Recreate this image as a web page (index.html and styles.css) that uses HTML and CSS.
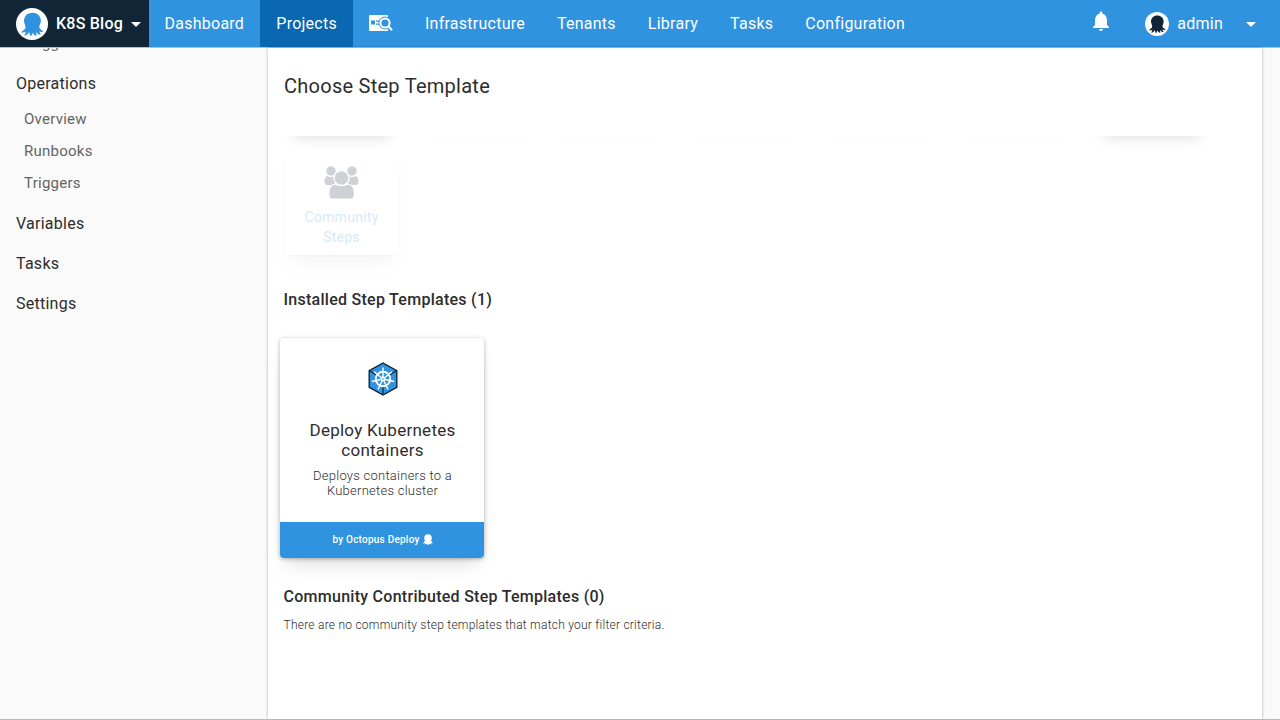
FILE: index.html
```html
<!DOCTYPE html>
<html lang="en">
<head>
<meta charset="utf-8">
<title>Choose Step Template</title>
<link rel="stylesheet" href="styles.css">
</head>
<body>
<svg class="defs" width="0" height="0">
  <symbol id="octopus" viewBox="0 0 32 32">
    <path d="M16.400 4.700C11.300 4.700 8 8.300 8 12.700c0 3 1.800 4.800 1.500 7-.3 2.200-2.400 2.500-4.500 4.500 1.800.6 3.600.2 5-.7l-1.700 4.200c2.200-.2 3.600-1.600 4.800-3.400l1.500 3.900c1.200-.6 1.700-2.200 2.200-3.800.7 1.700 1.700 3.100 3.400 3.500.4-1.300.1-2.700-.2-4 1.300 1.500 2.700 2.900 4.600 2.800-.1-1.300-.8-2.300-1.600-3.400 1.400.7 2.800 1 4.400.2-1.600-2-3.800-2-4.100-4.200-.3-2 1.700-4 1.600-6.600-.2-4.600-3.500-8-8.500-8z"/>
  </symbol>
</svg>
<header class="topbar">
  <div class="space">
    <svg class="space-logo" viewBox="0 0 32 32"><circle cx="16" cy="16" r="16" fill="#fff"/><use href="#octopus" fill="#2f93e0"/></svg>
    <span>K8S Blog</span><i class="caret"></i>
  </div>
  <nav class="nav">
    <a class="dashboard">Dashboard</a>
    <a class="active">Projects</a>
    <a class="nav-search"><svg width="24" height="17" viewBox="0 0 24 17"><path d="M1 0h17a1 1 0 0 1 1 1v15H1a1 1 0 0 1-1-1V1a1 1 0 0 1 1-1z" fill="#fff"/><path d="M2 5.500h4v4H2zM7 5.500h4v1.200H7zM7 8.500h4v1.200H7z" fill="#2f93e0"/><circle cx="16" cy="8" r="6.500" fill="#2f93e0"/><circle cx="16" cy="8" r="4.600" fill="#2f93e0" stroke="#fff" stroke-width="2"/><path d="M19.300 11.300l3.700 4" stroke="#fff" stroke-width="2.200"/></svg></a>
    <a>Infrastructure</a>
    <a>Tenants</a>
    <a>Library</a>
    <a>Tasks</a>
    <a>Configuration</a>
  </nav>
  <div class="account">
    <svg class="bell" width="24" height="24" viewBox="0 0 24 24"><path d="M12 22c1.100 0 2-.9 2-2h-4c0 1.100.9 2 2 2zm6-6v-5c0-3.070-1.640-5.640-4.500-6.320V4c0-.83-.67-1.500-1.500-1.500s-1.500.67-1.500 1.500v.68C7.630 5.360 6 7.920 6 11v5l-2 2v1h16v-1l-2-2z" fill="#fff"/></svg>
    <svg class="avatar" viewBox="0 0 32 32"><circle cx="16" cy="16" r="16" fill="#fff"/><use href="#octopus" fill="#122536"/></svg>
    <span>admin</span><i class="caret"></i>
  </div>
</header>
<div class="page">
  <aside class="sidebar">
    <a class="sub clipped">Triggers</a>
    <a class="group">Operations</a>
    <a class="sub">Overview</a>
    <a class="sub">Runbooks</a>
    <a class="sub">Triggers</a>
    <a class="group">Variables</a>
    <a class="group">Tasks</a>
    <a class="group">Settings</a>
  </aside>
  <main class="paper">
    <h1>Choose Step Template</h1>
    <section class="categories">
      <div class="row-above"><i class="solid"></i><i></i><i></i><i></i><i></i><i></i><i class="solid"></i></div>
      <div class="category">
        <svg width="36" height="34" viewBox="0 0 36 34"><g fill="#122536"><circle cx="7" cy="5" r="4.700"/><circle cx="28" cy="5" r="4.700"/><path d="M3 10q4 2 8 0v9H3q-2.500-.5-2.500-3.500 0-4 2.500-5.500zM32 10q-4 2-8 0v9h8q2.500-.5 2.500-3.500 0-4-2.500-5.500z"/></g><path d="M11 18q6.500 3.500 13 0 6 1 6.500 9 .2 6-3.500 6H8q-3.500 0-3.200-6 .5-8 6.200-9z" fill="#122536" stroke="#fff" stroke-width="1.200"/><circle cx="17.500" cy="12" r="7.500" fill="#122536" stroke="#fff" stroke-width="1.300"/></svg>
        <span>Community<br>Steps</span>
      </div>
    </section>
    <h2>Installed Step Templates (1)</h2>
    <article class="card">
      <div class="card-body">
        <svg class="kube" width="30" height="34" viewBox="0 0 30 34"><path d="M15 1l13.800 7.600v16.800L15 33 1.200 25.400V8.600z" fill="#2f93e0" stroke="#122536" stroke-width="1.400"/><path d="M1.500 8.800L15 17l13.500-8.200M15 17v16" stroke="#122536" stroke-width="1.200" fill="none"/><circle cx="15" cy="17" r="7.200" fill="#2f93e0" stroke="#fff" stroke-width="1.900"/><path d="M15 17V5.500M15 17l8.900-7.200M15 17l11.200 2.500M15 17l5 10.400M15 17l-5 10.400M15 17L3.800 19.500M15 17L6.100 9.800" stroke="#fff" stroke-width="1.400"/><circle cx="15" cy="17" r="2.400" fill="#fff"/><circle cx="15" cy="17" r=".8" fill="#2f93e0"/></svg>
        <h3>Deploy Kubernetes containers</h3>
        <p>Deploys containers to a Kubernetes cluster</p>
      </div>
      <footer>by Octopus Deploy <svg width="10" height="11" viewBox="0 0 10 11"><path d="M5 .3C2.500.3 1.200 2 1.200 4c.1 1.200.7 1.700.5 2.800C1.500 8 .7 8.500.1 9.200c.8.400 1.500.1 2-.2l-.3 1.700 1.700-1.200.8 1.200h1.400l.8-1.200 1.700 1.200L8 9c.6.500 1.300.6 2 .1C9.200 8.600 8.400 8 8.300 6.800 8.200 5.700 8.800 5.200 8.800 4 8.900 1.800 7.500.3 5 .3z" fill="#fff"/></svg></footer>
    </article>
    <h2 class="community-title">Community Contributed Step Templates (0)</h2>
    <p class="empty">There are no community step templates that match your filter criteria.</p>
  </main>
</div>
</body>
</html>
```
FILE: styles.css
```css
* { box-sizing: border-box; }
body {
  margin: 0;
  height: 720px;
  overflow: hidden;
  display: flex;
  flex-direction: column;
  background: #fafafa;
  border-bottom: 1px solid #b8b8b8;
  font-family: Roboto, "Liberation Sans", sans-serif;
  color: #2d2d2d;
}
.defs { display: none; }
h1, h2, h3, p { margin: 0; }
.topbar {
  flex: none;
  display: flex;
  height: 48px;
  background: #2f93e0;
  border-bottom: 1px solid #b9bec3;
  color: #fff;
  font-size: 16px;
  letter-spacing: 0.25px;
}
.space {
  display: flex;
  align-items: center;
  width: 149px;
  padding-left: 16px;
  background: #122536;
  font-weight: 500;
  letter-spacing: 0.23px;
}
.space-logo { width: 32px; height: 32px; margin-right: 8px; }
.caret { border: 5px solid transparent; border-top-color: #fff; border-bottom: 0; }
.space .caret { margin: 2px 0 0 8px; }
.nav { display: flex; }
.nav a { display: flex; align-items: center; padding: 0 16px; }
.nav .dashboard { width: 111px; padding-left: 15.500px; }
.nav .active { width: 93px; padding-left: 16.300px; background: #0a67b1; }
.account { margin-left: auto; display: flex; align-items: center; padding-right: 24px; }
.bell { margin: -5px 32px 0 0; }
.avatar { width: 24px; height: 24px; margin-right: 8px; }
.account .caret { margin: 2px 0 0 23px; }
.page { flex: 1; min-height: 0; display: flex; }
.sidebar {
  flex: none;
  width: 268px;
  overflow: hidden;
  display: flex;
  flex-direction: column;
}
.group { height: 40px; padding: 1px 16px 0; line-height: 40px; font-size: 16px; letter-spacing: 0.25px; }
.sub { height: 32px; padding: 0 24px; line-height: 32px; font-size: 15px; letter-spacing: 0.25px; color: #646464; }
.clipped { flex: none; margin-top: -21px; margin-bottom: 4px; }
.sub + .group { margin-top: 4px; }
.clipped + .group { margin-top: 0; }
.paper {
  width: 994px;
  padding: 0 16px;
  background: #fff;
  box-shadow: 0 0 3px rgba(0, 0, 0, 0.3);
}
h1 { height: 88px; padding-top: 24px; font-size: 20px; font-weight: 400; line-height: 28px; letter-spacing: 0.26px; }
.categories { height: 142px; overflow: hidden; margin: 0 -16px; padding: 0 16px; }
.row-above { display: grid; grid-template-columns: repeat(7, 115px); column-gap: 20px; height: 10px; }
.row-above i { height: 109px; margin-top: -113px; box-shadow: 0 14px 14px -10px rgba(0, 0, 0, 0.018); }
.row-above .solid { box-shadow: 0 14px 14px -10px rgba(0, 0, 0, 0.16); }
.category {
  position: relative;
  width: 115px;
  height: 109px;
  padding-top: 20px;
  display: flex;
  flex-direction: column;
  align-items: center;
  border-radius: 4px;
  background: #fff;
  box-shadow: 0 14px 16px -9px rgba(0, 0, 0, 0.22), 0 1px 2px rgba(0, 0, 0, 0.14);
  opacity: 0.2;
  text-align: center;
  font-size: 14px;
  line-height: 20px;
  letter-spacing: 0.26px;
  color: #2f93e0;
}
.category svg { margin: 0 0 7px; }
h2 { margin-left: -0.500px; font-size: 16px; line-height: 24px; font-weight: 500; letter-spacing: 0.27px; }
.categories + h2 { padding-top: 10px; }
.card {
  width: 204px;
  height: 220px;
  margin: 26px 0 0 -4px;
  display: flex;
  flex-direction: column;
  border-radius: 4px;
  overflow: hidden;
  background: #fff;
  box-shadow: 0 12px 18px -6px rgba(0, 0, 0, 0.13), 0 1px 4px rgba(0, 0, 0, 0.3);
  text-align: center;
}
.card-body { flex: 1; padding: 24px 19px 0 20px; }
.kube { display: block; margin: 0 auto 24px; }
h3 { font-size: 17px; line-height: 20px; font-weight: 400; letter-spacing: 0.26px; }
.card p { margin-top: 8px; font-size: 13px; line-height: 15px; font-weight: 300; letter-spacing: 0.25px; }
.card footer {
  height: 36px;
  padding: 0 0 1px 1px;
  display: flex;
  align-items: center;
  justify-content: center;
  gap: 3px;
  background: #2f93e0;
  color: #fff;
  font-size: 10px;
  font-weight: 500;
  letter-spacing: 0.23px;
}
.community-title { margin-top: 27px; }
.empty { margin: 7px 0 0 -0.500px; font-size: 12px; line-height: 18px; font-weight: 300; letter-spacing: 0.24px; }
```
